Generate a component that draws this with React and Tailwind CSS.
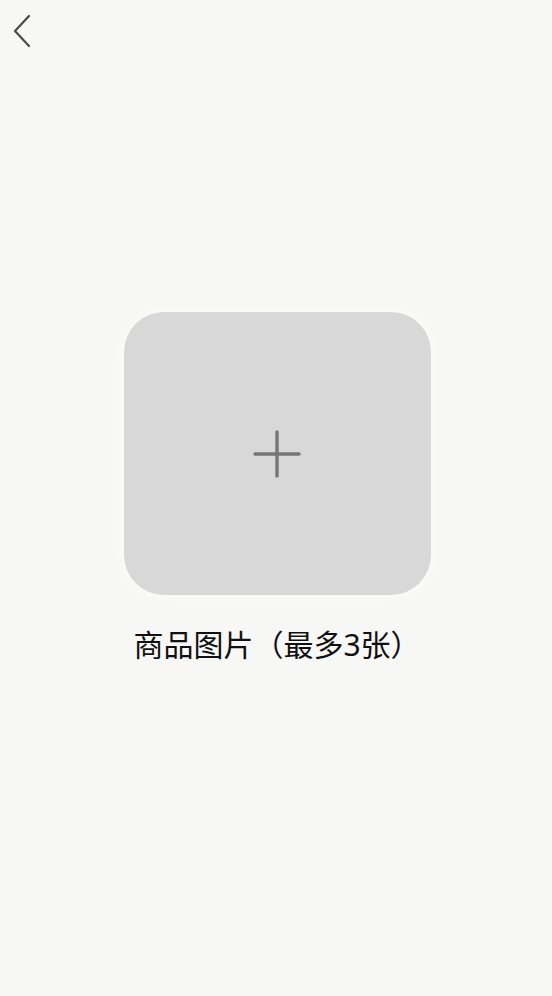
import React from 'react';

export default function App() {
  return (
    <main
      className="min-h-screen w-full bg-[#f7f7f5] flex flex-col"
      style={{ fontFamily: '"Noto Sans", "Noto Sans CJK SC", sans-serif' }}
    >
      {/* Header */}
      <div className="h-[60px] flex items-start">
        <button className="mt-[14px] ml-[10px] w-[24px] h-[34px] flex items-center justify-center">
          <svg width="20" height="34" viewBox="0 0 20 34" fill="none">
            <path d="M17 2 L3 17 L17 32" stroke="#4a4a4a" strokeWidth="2.2" strokeLinecap="round" strokeLinejoin="round" />
          </svg>
        </button>
      </div>

      {/* Upload */}
      <div className="flex flex-col items-center pt-[252px] pl-[2px]">
        <button className="w-[307px] h-[283px] rounded-[40px] bg-[#d8d8d8] flex items-center justify-center shadow-[0_0_12px_rgba(255,255,255,0.9)]">
          <svg width="50" height="50" viewBox="0 0 50 50" fill="none">
            <path d="M25 3 V47 M3 25 H47" stroke="#767676" strokeWidth="3.4" strokeLinecap="round" />
          </svg>
        </button>
        <p className="mt-[32px] text-[30px] leading-[36px] text-[#111111]">商品图片（最多3张）</p>
      </div>
    </main>
  );
}
